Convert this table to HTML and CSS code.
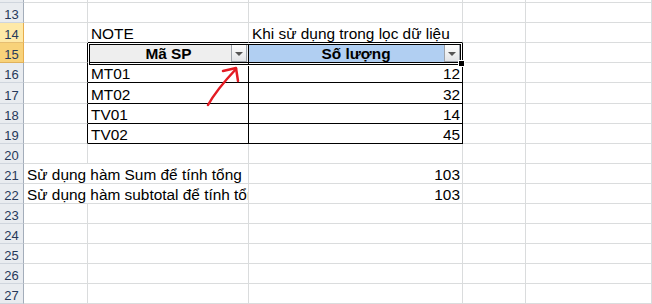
FILE: index.html
```html
<!DOCTYPE html>
<html lang="vi">
<head>
<meta charset="utf-8">
<title>Sheet</title>
<link rel="stylesheet" href="styles.css">
</head>
<body>
<div class="sheet">
  <!-- row 12 -->
  <div class="rh"></div><div class="c"></div><div class="c"></div><div class="c"></div><div class="c"></div><div class="c"></div>
  <!-- row 13 -->
  <div class="rh">13</div><div class="c"></div><div class="c"></div><div class="c"></div><div class="c"></div><div class="c"></div>
  <!-- row 14 -->
  <div class="rh hl1">14</div><div class="c"></div><div class="c bb">NOTE</div><div class="c bb">Khi sử dụng trong lọc dữ liệu</div><div class="c"></div><div class="c"></div>
  <!-- row 15 -->
  <div class="rh hl2">15</div><div class="c br"></div>
  <div class="c hdr gray bb br">Mã SP<span class="dd"></span><span class="sel"><span class="handle"></span></span></div>
  <div class="c hdr blue bb br">Số lượng<span class="dd dd-c"></span></div>
  <div class="c"></div><div class="c"></div>
  <!-- row 16 -->
  <div class="rh">16</div><div class="c br"></div><div class="c bb br">MT01</div><div class="c num bb br">12</div><div class="c"></div><div class="c"></div>
  <!-- row 17 -->
  <div class="rh">17</div><div class="c br"></div><div class="c bb br">MT02</div><div class="c num bb br">32</div><div class="c"></div><div class="c"></div>
  <!-- row 18 -->
  <div class="rh">18</div><div class="c br"></div><div class="c bb br">TV01</div><div class="c num bb br">14</div><div class="c"></div><div class="c"></div>
  <!-- row 19 -->
  <div class="rh">19</div><div class="c br"></div><div class="c bb br">TV02</div><div class="c num bb br">45</div><div class="c"></div><div class="c"></div>
  <!-- row 20 -->
  <div class="rh">20</div><div class="c"></div><div class="c"></div><div class="c"></div><div class="c"></div><div class="c"></div>
  <!-- row 21 -->
  <div class="rh">21</div><div class="c span2">Sử dụng hàm Sum để tính tổng</div><div class="c num">103</div><div class="c"></div><div class="c"></div>
  <!-- row 22 -->
  <div class="rh">22</div><div class="c span2">Sử dụng hàm subtotal để tính tổng</div><div class="c num">103</div><div class="c"></div><div class="c"></div>
  <!-- rows 23-27 -->
  <div class="rh">23</div><div class="c"></div><div class="c"></div><div class="c"></div><div class="c"></div><div class="c"></div>
  <div class="rh">24</div><div class="c"></div><div class="c"></div><div class="c"></div><div class="c"></div><div class="c"></div>
  <div class="rh">25</div><div class="c"></div><div class="c"></div><div class="c"></div><div class="c"></div><div class="c"></div>
  <div class="rh">26</div><div class="c"></div><div class="c"></div><div class="c"></div><div class="c"></div><div class="c"></div>
  <div class="rh">27</div><div class="c"></div><div class="c"></div><div class="c"></div><div class="c"></div><div class="c"></div>
</div>
<svg class="arrow" width="652" height="304" viewBox="0 0 652 304">
  <path d="M208 105 C 213 96, 221 85, 236 69" />
  <path d="M223 71 L236 68 L238 81" />
</svg>
</body>
</html>
```

FILE: styles.css
```css
html, body {
  margin: 0;
  padding: 0;
}
body {
  width: 652px;
  height: 304px;
  overflow: hidden;
  position: relative;
  background: #fff;
  font-family: "Liberation Sans", Arial, sans-serif;
}
.sheet {
  display: grid;
  grid-template-columns: 24px 64px 161px 214px 63px 1fr;
  grid-template-rows: 20px 20px 20px 20px 20px 21px repeat(10, 20px);
  margin-top: -17px;
}
.rh {
  box-sizing: border-box;
  background: #e9ecf0;
  border-right: 1px solid #a3adba;
  border-bottom: 1px solid #cfd5dd;
  color: #27395a;
  font-size: 13px;
  line-height: 14px;
  display: flex;
  justify-content: center;
  align-items: flex-end;
}
.rh.hl1 {
  background: #fee9a8;
  border-right-color: #e6ad4c;
  border-bottom-color: #e6be72;
}
.rh.hl2 {
  background: #f8d27a;
  border-right-color: #e6ad4c;
  border-bottom-color: #e0b25c;
}
.c {
  box-sizing: border-box;
  min-width: 0;
  border-right: 1px solid #dadcdd;
  border-bottom: 1px solid #dadcdd;
  font-size: 15.4px;
  line-height: 17px;
  color: #000;
  display: flex;
  align-items: flex-end;
  padding: 0 2px 0 3px;
  white-space: nowrap;
  overflow: hidden;
}
.num {
  justify-content: flex-end;
}
.span2 {
  grid-column: span 2;
}
.br {
  border-right-color: #000;
}
.bb {
  border-bottom-color: #000;
}
.hdr {
  font-weight: bold;
  justify-content: center;
  position: relative;
  overflow: visible;
}
.gray {
  background: #eeeeee;
}
.blue {
  background: #b1cff2;
}
.dd {
  position: absolute;
  right: 1px;
  top: 1px;
  width: 16px;
  height: 18px;
  box-sizing: border-box;
  border: 1px solid #9da3ab;
  background: linear-gradient(#fdfdfd, #e2e4e7);
}
.dd-c {
  right: 2px;
}
.dd::after {
  content: "";
  position: absolute;
  left: 3px;
  top: 7px;
  border-left: 4px solid transparent;
  border-right: 4px solid transparent;
  border-top: 4px solid #555;
}
.sel {
  position: absolute;
  left: 1px;
  top: 1px;
  width: 372px;
  height: 21px;
  box-sizing: border-box;
  border: 1px solid #000;
  box-shadow: 0 0 0 1px #fff;
  z-index: 2;
}
.handle {
  position: absolute;
  right: -4px;
  bottom: -2px;
  width: 5px;
  height: 5px;
  background: #000;
  outline: 1px solid #fff;
}
.arrow {
  position: absolute;
  left: 0;
  top: 0;
  z-index: 5;
  pointer-events: none;
  fill: none;
  stroke: #e31b23;
  stroke-width: 2.5;
  stroke-linecap: round;
  stroke-linejoin: round;
}
```
